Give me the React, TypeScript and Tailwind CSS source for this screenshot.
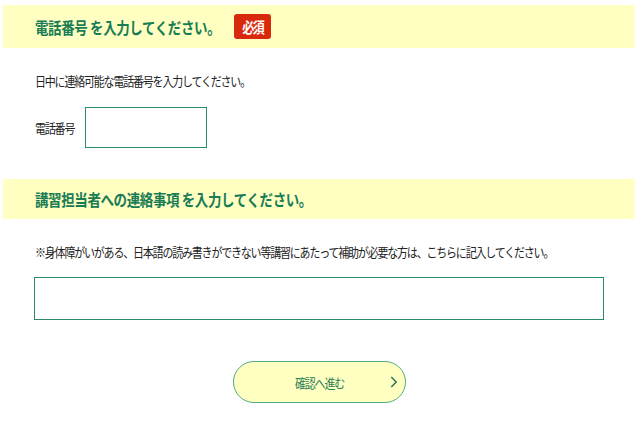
import { ChevronRight } from "lucide-react";

const jp = { fontFamily: '"Noto Sans CJK JP", "Noto Sans", sans-serif' };

function SectionHeader({ title, required }: { title: string; required?: boolean }) {
  return (
    <div className="ml-[3px] flex items-center bg-[#ffffc2] pl-[32px]" style={{ minHeight: required ? 43 : 40 }}>
      <h2 className="scale-y-[1.22] text-[13.5px] font-bold leading-[20px] tracking-[-0.4px] text-[#197c55]">{title}</h2>
      {required ? (
        <span className="ml-[14px] flex h-[25px] w-[37px] items-center justify-center rounded-[3px] bg-[#d9290c] text-white">
          <span className="scale-y-[1.2] text-[12px] font-bold tracking-[-1.5px]">必須</span>
        </span>
      ) : null}
    </div>
  );
}

export default function App() {
  return (
    <div className="min-h-[433px] w-[635px] bg-white pt-[5px]" style={jp}>
      <SectionHeader title="電話番号 を入力してください。" required />

      <p className="ml-[35px] mt-[24px] scale-y-[1.15] text-[11px] leading-[16px] tracking-[-1.2px] text-[#222]">
        日中に連絡可能な電話番号を入力してください。
      </p>

      <div className="ml-[35px] mt-[19px] flex items-center">
        <label className="w-[50px] scale-y-[1.15] text-[11px] tracking-[-1.2px] text-[#222]">電話番号</label>
        <input
          type="tel"
          className="h-[41px] w-[122px] border border-[#2a8c64] bg-white outline-none"
        />
      </div>

      <div className="mt-[31px]">
        <SectionHeader title="講習担当者への連絡事項 を入力してください。" />
      </div>

      <p className="ml-[35px] mt-[24px] scale-y-[1.15] text-[11px] leading-[16px] tracking-[-1.2px] text-[#222]">
        ※身体障がいがある、日本語の読み書きができない等講習にあたって補助が必要な方は、こちらに記入してください。
      </p>

      <textarea className="ml-[34px] mt-[18px] block h-[43px] w-[570px] resize-none border border-[#2a8c64] bg-white outline-none" />

      <button className="relative ml-[233px] mt-[41px] flex h-[42px] w-[173px] items-center justify-center rounded-full border-[1.5px] border-[#52ad82] bg-[#ffffc2] text-[#2a7d58]">
        <span className="scale-y-[1.15] text-[11px] tracking-[-1.2px]">確認へ進む</span>
        <ChevronRight className="absolute right-[2px] top-1/2 h-[18px] w-[18px] -translate-y-1/2 text-[#2a7d58]" strokeWidth={2.2} />
      </button>
    </div>
  );
}
